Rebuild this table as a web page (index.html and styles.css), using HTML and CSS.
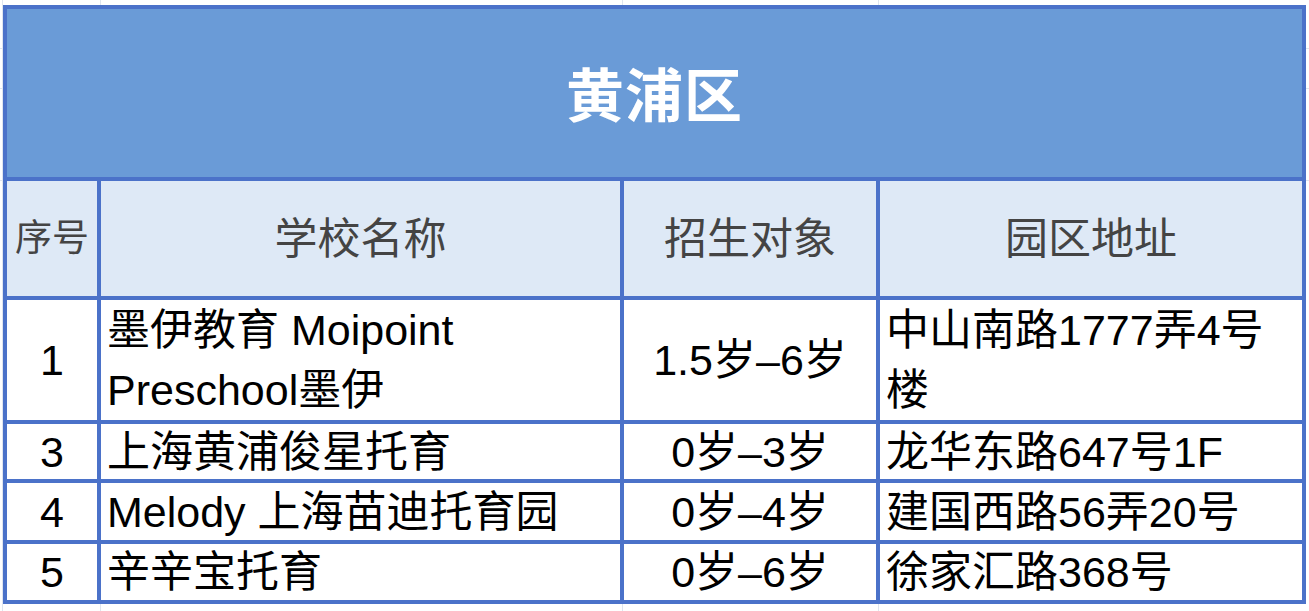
FILE: index.html
```html
<!DOCTYPE html>
<html lang="zh-CN">
<head>
<meta charset="utf-8">
<title>黄浦区</title>
<link rel="stylesheet" href="styles.css">
</head>
<body>
<div class="sheet">
  <div class="table">
    <div class="title">黄浦区</div>

    <div class="cell head center small">序号</div>
    <div class="cell head center">学校名称</div>
    <div class="cell head center">招生对象</div>
    <div class="cell head center">园区地址</div>

    <div class="cell center">1</div>
    <div class="cell left">墨伊教育 Moipoint Preschool墨伊</div>
    <div class="cell center">1.5岁–6岁</div>
    <div class="cell left">中山南路1777弄4号楼</div>

    <div class="cell center">3</div>
    <div class="cell left">上海黄浦俊星托育</div>
    <div class="cell center">0岁–3岁</div>
    <div class="cell left">龙华东路647号1F</div>

    <div class="cell center">4</div>
    <div class="cell left">Melody 上海苗迪托育园</div>
    <div class="cell center">0岁–4岁</div>
    <div class="cell left">建国西路56弄20号</div>

    <div class="cell center">5</div>
    <div class="cell left">辛辛宝托育</div>
    <div class="cell center">0岁–6岁</div>
    <div class="cell left">徐家汇路368号</div>
  </div>
</div>
</body>
</html>
```

FILE: styles.css
```css
html, body {
  margin: 0;
  padding: 0;
}

body {
  width: 1309px;
  height: 611px;
  overflow: hidden;
  background-color: #ffffff;
  background-image:
    linear-gradient(to right, transparent 100px, #dfe5ef 100px, #dfe5ef 101px, transparent 101px),
    linear-gradient(to right, transparent 622px, #dfe5ef 622px, #dfe5ef 623px, transparent 623px),
    linear-gradient(to right, transparent 878px, #dfe5ef 878px, #dfe5ef 879px, transparent 879px),
    linear-gradient(to right, transparent 2px, #dfe5ef 2px, #dfe5ef 3px, transparent 3px),
    linear-gradient(to bottom, transparent 48px, #dfe5ef 48px, #dfe5ef 49px, transparent 49px),
    linear-gradient(to bottom, transparent 88px, #dfe5ef 88px, #dfe5ef 89px, transparent 89px),
    linear-gradient(to bottom, transparent 180px, #dfe5ef 180px, #dfe5ef 181px, transparent 181px);
  font-family: "Liberation Sans", "Noto Sans CJK SC", sans-serif;
}

.sheet {
  padding: 5px 0 0 3px;
}

.table {
  width: 1303px;
  display: grid;
  grid-template-columns: 90px 519px 252px 422px;
  grid-template-rows: 168px 115px 120px 55px 57px 56px;
  gap: 4px;
  padding: 4px;
  box-sizing: border-box;
  background: #4b72c9;
}

.title {
  grid-column: 1 / -1;
  background: #6a9bd7;
  color: #ffffff;
  font-family: "Noto Sans CJK SC", sans-serif;
  font-weight: 700;
  font-size: 58px;
  display: flex;
  align-items: center;
  justify-content: center;
  letter-spacing: 1px;
  padding-bottom: 2px;
}

.cell {
  background: #ffffff;
  color: #000000;
  font-size: 43px;
  line-height: 60px;
  display: flex;
  align-items: center;
  overflow: hidden;
}

.cell.head {
  background: #dee9f6;
  color: #444444;
}

.cell.small {
  font-size: 37px;
}

.center {
  justify-content: center;
  text-align: center;
}

.left {
  justify-content: flex-start;
  padding-left: 6px;
  padding-right: 10px;
}
```
